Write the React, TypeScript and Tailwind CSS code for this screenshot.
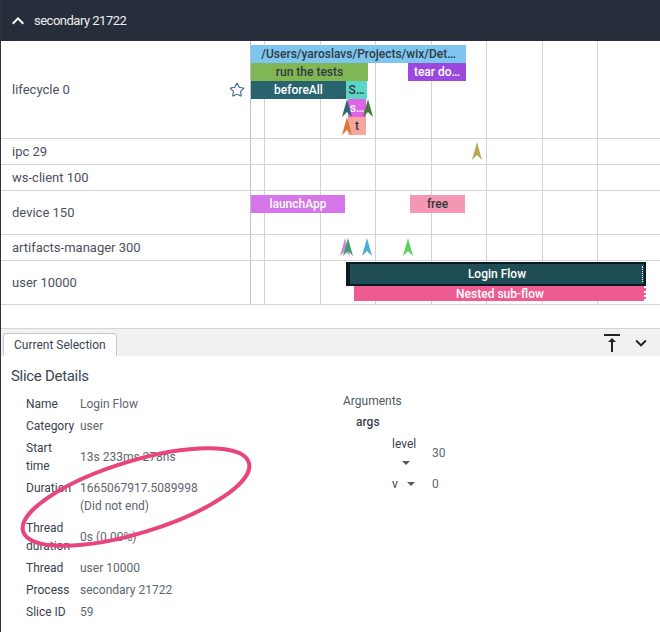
import React from 'react';
import { Star } from 'lucide-react';

type Slice = {
  left: number;
  top: number;
  width: number;
  height?: number;
  bg: string;
  text: string;
  dark?: boolean;
};

type Instant = { left: number; top: number; color: string };

type Track = {
  name: string;
  rowClass: string;
  star?: boolean;
  slices: Slice[];
  instants: Instant[];
};

const GRID = [13, 69, 124, 180, 235, 291, 346];

const tracks: Track[] = [
  {
    name: 'lifecycle 0',
    rowClass: 'h-[98px]',
    star: true,
    slices: [
      { left: 0, top: 4, width: 215, bg: '#7cc6ef', text: '/Users/yaroslavs/Projects/wix/Det…', dark: true },
      { left: 0, top: 22, width: 117, bg: '#80b654', text: 'run the tests', dark: true },
      { left: 157, top: 22, width: 58, bg: '#9c47de', text: 'tear do…' },
      { left: 0, top: 40, width: 95, bg: '#29636d', text: 'beforeAll' },
      { left: 95, top: 40, width: 21, bg: '#5bd5c8', text: 'S…', dark: true },
      { left: 97, top: 58, width: 18, bg: '#e063e6', text: 's…' },
      { left: 97, top: 76, width: 18, bg: '#f6a69c', text: 't', dark: true },
    ],
    instants: [
      { left: 91, top: 58, color: '#2a6a70' },
      { left: 112, top: 58, color: '#3f7c3c' },
      { left: 91, top: 76, color: '#d9793a' },
    ],
  },
  {
    name: 'ipc 29',
    rowClass: 'h-[26px]',
    slices: [],
    instants: [{ left: 221, top: 3, color: '#b9a550' }],
  },
  { name: 'ws-client 100', rowClass: 'h-[26px]', slices: [], instants: [] },
  {
    name: 'device 150',
    rowClass: 'h-[44px]',
    slices: [
      { left: 0, top: 4, width: 94, bg: '#d674ea', text: 'launchApp' },
      { left: 159, top: 4, width: 55, bg: '#f397b2', text: 'free', dark: true },
    ],
    instants: [],
  },
  {
    name: 'artifacts-manager 300',
    rowClass: 'h-[26px]',
    slices: [],
    instants: [
      { left: 89, top: 3, color: '#c98ae6' },
      { left: 92, top: 3, color: '#3f9f6a' },
      { left: 111, top: 3, color: '#4aaed2' },
      { left: 152, top: 3, color: '#5dcf5d' },
    ],
  },
  { name: 'user 10000', rowClass: 'h-[44px]', slices: [], instants: [] },
];

const InstantMark = ({ left, top, color }: Instant) => (
  <svg
    className="absolute"
    style={{ left, top }}
    width="10"
    height="18"
    viewBox="0 0 10 18"
  >
    <path d="M5 0 L10 18 L5 13 L0 18 Z" fill={color} />
  </svg>
);

const SliceBox = ({ left, top, width, height = 18, bg, text, dark }: Slice) => (
  <div
    className={`absolute flex items-center justify-center overflow-hidden whitespace-nowrap text-[12px] font-medium ${dark ? 'text-[#333a40]' : 'text-white'}`}
    style={{ left, top, width, height, background: bg }}
  >
    {text}
  </div>
);

const Caret = () => (
  <svg width="8" height="4" viewBox="0 0 8 4" className="inline-block">
    <path d="M0 0 L8 0 L4 4 Z" fill="#555b63" />
  </svg>
);

const details: { label: React.ReactNode; value: React.ReactNode; top?: boolean }[] = [
  { label: 'Name', value: 'Login Flow' },
  { label: 'Category', value: 'user' },
  { label: <>Start<br />time</>, value: '13s 233ms 278ns' },
  { label: 'Duration', value: <>1665067917.5089998<br />(Did not end)</>, top: true },
  { label: <>Thread<br />duration</>, value: '0s (0.00%)' },
  { label: 'Thread', value: 'user 10000' },
  { label: 'Process', value: 'secondary 21722' },
  { label: 'Slice ID', value: '59' },
];

export default function App() {
  return (
    <div className="relative w-[660px] h-[632px] overflow-hidden bg-white border-l border-[#2c3240] font-['Roboto',sans-serif]">
      {/* Process header */}
      <div className="h-[41px] bg-[#272d3a] flex items-center pl-[5px] gap-[4px] text-[13px] tracking-[-0.5px] text-[#eceef1]">
        <svg width="24" height="24" viewBox="0 0 24 24">
          <path d="M12 8l-6 6 1.41 1.41L12 10.83l4.59 4.58L18 14z" fill="#ffffff" />
        </svg>
        <span>secondary 21722</span>
      </div>

      {/* Tracks */}
      <div className="relative">
        {tracks.map((t) => (
          <div key={t.name} className={`flex border-b border-[#d3d5d9] ${t.rowClass}`}>
            <div className="w-[250px] shrink-0 border-r border-[#b8c1cf] flex items-center justify-between pl-[11px] pr-[5px] text-[13px] text-[#4a515d]">
              <span>{t.name}</span>
              {t.star && <Star size={16} strokeWidth={1.6} className="text-[#3d5c93]" />}
            </div>
            <div className="relative flex-1">
              {GRID.map((x) => (
                <div key={x} className="absolute top-0 bottom-[-1px] w-px bg-[#cfd2d7]" style={{ left: x }} />
              ))}
              {t.slices.map((s) => (
                <SliceBox key={s.text + s.left} {...s} />
              ))}
              {t.instants.map((i) => (
                <InstantMark key={i.left + i.color} {...i} />
              ))}
              {t.name === 'user 10000' && (
                <>
                  <div className="absolute left-[95px] top-[1px] w-[300px] h-[24px] bg-[#1f4d55] border-2 border-l-4 border-[#0b1c20] flex items-center justify-center text-[12px] font-medium text-white">
                    Login Flow
                    <div className="absolute right-[1px] top-[2px] bottom-[2px] border-r border-dotted border-white" />
                  </div>
                  <div className="absolute left-[103px] top-[25px] w-[292px] h-[15px] bg-[#ee5b92] flex items-center justify-center text-[12px] font-medium text-white">
                    Nested sub-flow
                    <div className="absolute right-0 top-0 bottom-0 border-r-2 border-dotted border-white" />
                  </div>
                </>
              )}
            </div>
          </div>
        ))}
      </div>
      <div className="h-[23px]" />

      {/* Tab bar */}
      <div className="h-[28px] bg-[#f1f1f1] border-t border-[#d4d4d4] flex items-end pl-[2px] pr-[8px]">
        <div className="h-[23px] px-[10px] bg-white border border-b-0 border-[#c8c8c8] rounded-t-[4px] flex items-center text-[12px] text-[#3a4352]">
          Current Selection
        </div>
        <div className="ml-auto self-center flex items-center gap-[6px]">
          <svg width="24" height="24" viewBox="0 0 24 24">
            <path d="M8 11h3v10h2V11h3l-4-4-4 4zM4 3v2h16V3H4z" fill="#222" />
          </svg>
          <svg width="22" height="22" viewBox="0 0 24 24">
            <path d="M7.41 8.59L12 13.17l4.59-4.58L18 10l-6 6-6-6 1.41-1.41z" fill="#222" />
          </svg>
        </div>
      </div>

      {/* Details */}
      <div className="pl-[10px] pt-[10px]">
        <div className="text-[15px] leading-[20px] tracking-[-0.3px] text-[#3c4655]">Slice Details</div>
        <div className="flex">
          <div className="w-[332px] shrink-0 pl-[15px] mt-[7px]">
            <div className="grid grid-cols-[54px_auto] items-center text-[12px] leading-[18px]">
              {details.map((d, idx) => (
                <React.Fragment key={idx}>
                  <div className={`py-[2px] text-[#3a424d] whitespace-nowrap ${d.top ? 'self-start' : ''}`}>{d.label}</div>
                  <div className="py-[2px] text-[#60666e] whitespace-nowrap">{d.value}</div>
                </React.Fragment>
              ))}
            </div>
          </div>
          <div className="mt-[6px] text-[12px] leading-[18px]">
            <div className="text-[#515862]">Arguments</div>
            <div className="pl-[13px] mt-[3px] font-medium text-[#3a424d]">args</div>
            <div className="pl-[49px] mt-[4px] grid grid-cols-[40px_auto] items-center gap-y-[4px]">
              <div className="text-[#3a424d]">
                level
                <div className="pl-[10px] leading-[18px]"><Caret /></div>
              </div>
              <div className="text-[#60666e]">30</div>
              <div className="flex items-center text-[#3a424d]">
                v<span className="ml-[9px] flex"><Caret /></span>
              </div>
              <div className="text-[#60666e]">0</div>
            </div>
          </div>
        </div>
      </div>

      {/* Annotation */}
      <svg className="absolute inset-0 pointer-events-none" width="660" height="632">
        <ellipse
          cx="135"
          cy="497"
          rx="118"
          ry="36"
          transform="rotate(-17 135 497)"
          fill="none"
          stroke="#e8457f"
          strokeWidth="4"
        />
      </svg>
    </div>
  );
}
